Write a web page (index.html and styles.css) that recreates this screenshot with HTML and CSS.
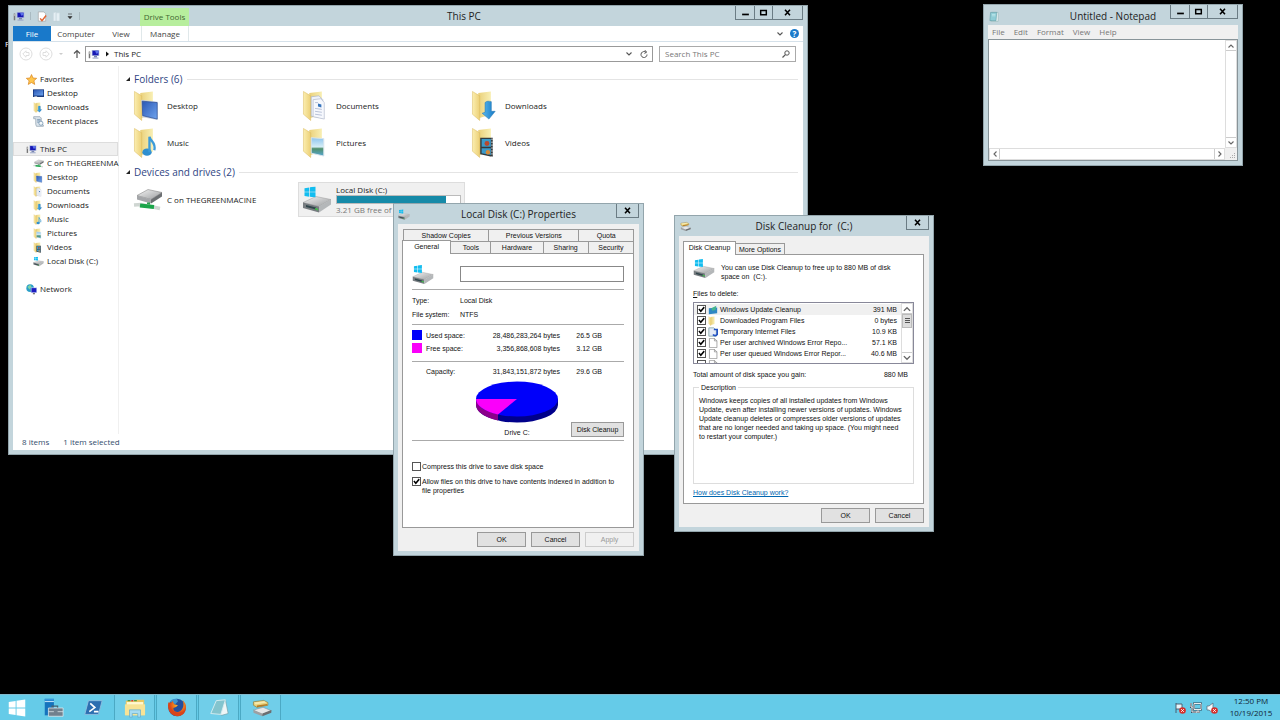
FILE: index.html
```html
<!DOCTYPE html>
<html lang="en">
<head>
<meta charset="utf-8">
<title>Desktop</title>
<link rel="stylesheet" href="styles.css">
</head>
<body>
<svg class="sprite" aria-hidden="true">
  <defs>
    <linearGradient id="gFolder" x1="0" x2="1"><stop offset="0" stop-color="#fbeeb0"/><stop offset="1" stop-color="#ecd077"/></linearGradient>
    <linearGradient id="gBack" x1="0" x2="1"><stop offset="0" stop-color="#ead07a"/><stop offset="1" stop-color="#f8efb4"/></linearGradient>
    <linearGradient id="gBlue" x1="0" y1="0" x2="1" y2="1"><stop offset="0" stop-color="#2a57b4"/><stop offset="1" stop-color="#6fa4ee"/></linearGradient>
    <linearGradient id="gArrow" x1="0" x2="1"><stop offset="0" stop-color="#58b8ee"/><stop offset="1" stop-color="#1478c4"/></linearGradient>
    <linearGradient id="gSky" x1="0" y1="0" x2="0" y2="1"><stop offset="0" stop-color="#8cc4ee"/><stop offset=".5" stop-color="#d5edf6"/><stop offset=".6" stop-color="#4f8f6c"/><stop offset="1" stop-color="#58a8d2"/></linearGradient>
    <linearGradient id="gMetal" x1="0" y1="0" x2="1" y2="1"><stop offset="0" stop-color="#f4f4f4"/><stop offset="1" stop-color="#9a9c9e"/></linearGradient>
    <radialGradient id="gFox" cx=".6" cy=".3"><stop offset="0" stop-color="#ffd23c"/><stop offset=".5" stop-color="#f58a1c"/><stop offset="1" stop-color="#d8451a"/></radialGradient>
  </defs>
  <symbol id="flag" viewBox="0 0 16 16"><path fill="#12bdf0" d="M0 2.500 7 1.400V7.600H0zM8 1.200 16 0V7.600H8zM0 8.500H7V14.800L0 13.700zM8 8.500H16V16L8 14.900z"/></symbol>
  <symbol id="pc" viewBox="0 0 16 14"><path d="M1 3h2v9H1z" fill="#777"/><path d="M1 4h2v2H1z" fill="#c4c4c4"/><path d="M5 1h10v8H5z" fill="#a8b4d8"/><path d="M6 2h8v6H6z" fill="#1717b4"/><path d="M9.500 2H14v3L11 6z" fill="#5b72e8"/><path d="M8 9h4v2H8z" fill="#7a86b0"/><path d="M6 11h8v1.500H6z" fill="#9aa6c8"/></symbol>
  <symbol id="folder" viewBox="0 0 30 32"><path d="M7 3 20 1.500v24L8 29z" fill="url(#gBack)"/><path d="M1 1.500 8.500 6v25.500L1 25z" fill="url(#gFolder)" stroke="#d9b95a" stroke-width=".5"/></symbol>
  <symbol id="f-desktop" viewBox="0 0 30 32"><use href="#folder"/><path d="M8 10 25 12v19L9 28z" fill="#c9d3e2"/><path d="M9 11.500 24.500 13V30L9.500 26.500z" fill="url(#gBlue)" stroke="#28498f" stroke-width=".7"/></symbol>
  <symbol id="f-docs" viewBox="0 0 30 32"><use href="#folder"/><path d="M9 7 17 6l4 4v19L9 27z" fill="#eef2fa" stroke="#a6b0c4" stroke-width=".7"/><path d="M11 10 19 9l3.500 4v17L11 27.500z" fill="#f6f8fd" stroke="#a6b0c4" stroke-width=".6"/><path d="M13 13h3M13 19l7 1M13 22l7 1M13 25l7 1" stroke="#9aa8c6" stroke-width=".7"/><path d="M16 14l3.500 1v3L16 17z" fill="#3674bc"/></symbol>
  <symbol id="f-down" viewBox="0 0 30 32"><use href="#folder"/><path d="M14 13c2-2 4-1.500 6.500-1v10h4L18 30 11 24l3-1z" fill="url(#gArrow)" stroke="#1c6fae" stroke-width=".5"/></symbol>
  <symbol id="f-music" viewBox="0 0 30 32"><use href="#folder"/><ellipse cx="14" cy="26" rx="4.800" ry="3.800" fill="#2f8fd0"/><path d="M16.500 26V10c1 5 7 6 5 14" fill="none" stroke="#3d9bd8" stroke-width="2.400"/></symbol>
  <symbol id="f-pics" viewBox="0 0 30 32"><use href="#folder"/><path d="M9 11 22 12v18L9 27z" fill="url(#gSky)" stroke="#d9e4ec"/></symbol>
  <symbol id="f-video" viewBox="0 0 30 32"><use href="#folder"/><path d="M9 11 22 11v20L9 28z" fill="#333a3e"/><path d="M10.500 12.500h9.500v8h-9.500zM10.500 22h9.500v7l-9.500-2z" fill="#3a9acb"/><circle cx="16" cy="17" r="2.500" fill="#b8482f"/><circle cx="17" cy="26" r="2.300" fill="#d58b3a"/><path d="M21.200 12v19" stroke="#eee" stroke-width="1" stroke-dasharray="1.500 1.500"/></symbol>
  <symbol id="disk" viewBox="0 0 30 26"><path d="M1 16 14 10l15 3-12 7z" fill="url(#gMetal)" stroke="#888" stroke-width=".4"/><path d="M1 16l16 4v6L1 21.500z" fill="#777c80"/><path d="M17 20l12-7v5L17 26z" fill="#b4b7b9"/><path d="M4 18.500l10 2.600v2L4 20.500z" fill="#30454b"/><path d="M13 21.500l3 .8v1.600l-3-.8z" fill="#3fbf4a"/><use href="#flag" x="2" y="0" width="12" height="11"/></symbol>
  <symbol id="netdisk" viewBox="0 0 30 24"><path d="M4 8 15 2l14 3-11 7z" fill="url(#gMetal)" stroke="#777" stroke-width=".5"/><path d="M4 8l14 4v4L4 12z" fill="#a4a6a9"/><path d="M18 12l11-7v4l-11 7z" fill="#6c6f72"/><path d="M14 15h3v4h-3z" fill="#2aa14c"/><path d="M1 17.500 8 17l19 4" stroke="#cfd6d2" stroke-width="3.500" fill="none"/><path d="M7 18l14 1.500" stroke="#1ba54a" stroke-width="4"/></symbol>
  <symbol id="star" viewBox="0 0 16 16"><path d="M8 .8 10.200 5.800 15.500 6.300 11.500 9.900 12.700 15.200 8 12.400 3.300 15.200 4.500 9.900.5 6.300 5.800 5.800z" fill="#ffc64d" stroke="#d8811d"/></symbol>
  <symbol id="monitor" viewBox="0 0 16 14"><path d="M0 1h16v11H0z" fill="#0d2f75"/><path d="M1 2h14v8H1z" fill="url(#gBlue)"/><path d="M2 11h4v1H2z" fill="#ddd"/></symbol>
  <symbol id="recent" viewBox="0 0 16 16"><path d="M1 1h9l2 2v9l3 1v2H5l-1-3V4H1z" fill="#dbe4ec" stroke="#8b9cab"/><path d="M6 5h5M6 7h5M6 9h4" stroke="#6487a8"/><circle cx="11.500" cy="10.500" r="3" fill="#f4f8fa" stroke="#6487a8"/></symbol>
  <symbol id="network" viewBox="0 0 16 16"><circle cx="6" cy="6" r="5.500" fill="#2a9fc8"/><path d="M2 4l4-3 2 3-3 4z" fill="#7fd4a5"/><path d="M7 5h9v8H7z" fill="#b9c5ee"/><path d="M8 6h7v6H8z" fill="#1b1bc0"/><path d="M10 13h3v2h-3z" fill="#777"/></symbol>
  <symbol id="cleaner" viewBox="0 0 32 26"><path d="M5 4 20 2l6 3v4L10 12 5 9z" fill="#e9d27a" stroke="#8a6a20" stroke-width=".8"/><path d="M6 5l15-2 3 2-16 3z" fill="#f6eab0"/><path d="M10 9.500l15-2.500v2L10 12z" fill="#b57a25"/><path d="M5 16l14-4 12 5-13 6z" fill="#e6e7e8" stroke="#777" stroke-width=".6"/><path d="M5 16l13 5v4L5 20z" fill="#9da0a3"/><path d="M18 21l13-5v4l-13 5z" fill="#6b6e71"/></symbol>
  <symbol id="note" viewBox="0 0 16 16"><path d="M5 2h9v13H4z" fill="#f1f6f7" stroke="#9bb"/><path d="M3 2h9l-1 12H2z" fill="#8fcdd6" stroke="#4d8f99" stroke-width=".7"/><path d="M5 5h5M5 7h5" stroke="#c9ecef"/></symbol>
  <symbol id="page" viewBox="0 0 12 14"><path d="M1 .5h7l3.500 3.500v9.500H1z" fill="#fff" stroke="#888"/><path d="M8 .5V4h3.500" fill="none" stroke="#888"/></symbol>
  <symbol id="up" viewBox="0 0 8 8"><path d="M1.500 5.500 4 3 6.500 5.500" fill="none" stroke="currentColor" stroke-width="1.100"/></symbol>
  <symbol id="dn" viewBox="0 0 8 8"><path d="M1.500 2.500 4 5 6.500 2.500" fill="none" stroke="currentColor" stroke-width="1.100"/></symbol>
  <symbol id="lt" viewBox="0 0 8 8"><path d="M5.500 1.500 3 4 5.500 6.500" fill="none" stroke="currentColor" stroke-width="1.100"/></symbol>
  <symbol id="rt" viewBox="0 0 8 8"><path d="M2.500 1.500 5 4 2.500 6.500" fill="none" stroke="currentColor" stroke-width="1.100"/></symbol>
  <symbol id="min" viewBox="0 0 8 8"><path d="M1 5h6v1.500H1z"/></symbol>
  <symbol id="max" viewBox="0 0 8 8"><path d="M1.500 2.200h5v3.800h-5z" fill="none" stroke="#000" stroke-width="1.300"/></symbol>
  <symbol id="close" viewBox="0 0 8 8"><path d="M1.800 1.500 6.200 6.500M6.200 1.500 1.800 6.500" fill="none" stroke="#000" stroke-width="1.400"/></symbol>
  <symbol id="bad" viewBox="0 0 8 8"><circle cx="4" cy="4" r="3.800" fill="#d5302c"/><path d="M2.500 2.500l3 3M5.500 2.500l-3 3" stroke="#fff" stroke-width="1.100"/></symbol>
</svg>

<main class="desktop">
  <span class="desktop-label">F</span>

  <section class="window explorer" aria-label="This PC">
    <header class="explorer-top">
      <div class="quick">
        <svg class="i12"><use href="#pc"/></svg><i class="sep"></i>
        <svg class="i12" viewBox="0 0 12 12"><path d="M2 1h6l2 2v8H2z" fill="#fff" stroke="#a2a2a2" stroke-width=".7"/><path d="M4 8l2 2.500L10.500 5" fill="none" stroke="#e2622f" stroke-width="1.600"/></svg>
        <svg class="i12 faded" viewBox="0 0 12 12"><path d="M2 2l3-1v10H2zM5 2h4v9H5z" fill="#eef6fa" stroke="#c3d3da" stroke-width=".5"/></svg>
        <svg class="i8" viewBox="0 0 8 8"><path d="M2 2h4M2 4.500h4L4 6.800z" fill="#333" stroke="#333" stroke-width=".6"/></svg><i class="sep"></i>
      </div>
      <span class="drive-tools">Drive Tools</span>
      <h1 class="title">This PC</h1>
      <div class="caps">
        <button aria-label="Minimize"><svg><use href="#min"/></svg></button><button aria-label="Maximize"><svg><use href="#max"/></svg></button><button class="wide" aria-label="Close"><svg><use href="#close"/></svg></button>
      </div>
    </header>
    <nav class="ribbon">
      <button class="file">File</button><button class="rb-computer">Computer</button><button class="rb-view">View</button><button class="rb-manage">Manage</button>
      <span class="grow"></span>
      <button class="plain" aria-label="Expand the ribbon"><svg class="i8"><use href="#dn"/></svg></button>
      <button class="help" aria-label="Help">?</button>
    </nav>
    <div class="address-row">
      <button class="plain" aria-label="Back"><svg class="i14" viewBox="0 0 14 14"><circle cx="7" cy="7" r="6" fill="none" stroke="#dedede"/><path d="M10 5.500H7V3.800L3.800 7 7 10.200V8.500h3z" fill="none" stroke="#dedede"/></svg></button>
      <button class="plain fwd" aria-label="Forward"><svg class="i14" viewBox="0 0 14 14"><circle cx="7" cy="7" r="6" fill="none" stroke="#dedede"/><path d="M4 5.500h3V3.800L10.200 7 7 10.200V8.500H4z" fill="none" stroke="#dedede"/></svg></button>
      <svg class="i8 history" viewBox="0 0 8 8"><path d="M2 3h4L4 5z" fill="#ccc"/></svg>
      <button class="plain" aria-label="Up"><svg class="i10" viewBox="0 0 10 10"><path d="M5 9V1.500M2 4.500l3-3 3 3" fill="none" stroke="#555" stroke-width="1.200"/></svg></button>
      <div class="address">
        <svg class="i12"><use href="#pc"/></svg><svg class="i8" viewBox="0 0 8 8"><path d="M3 1.500 6 4 3 6.500z" fill="#111"/></svg><span>This PC</span><span class="grow"></span>
        <button class="plain" aria-label="Recent locations"><svg class="i8"><use href="#dn"/></svg></button>
        <button class="plain" aria-label="Refresh"><svg class="i8" viewBox="0 0 8 8"><path d="M6.200 2.500A3 3 0 1 0 7 4.500M4.500 0l2.200 2-2.200 1.500" fill="none" stroke="#555"/></svg></button>
      </div>
      <label class="search"><input type="text" placeholder="Search This PC" aria-label="Search This PC"><svg class="i8" viewBox="0 0 8 8"><circle cx="5" cy="3" r="2.200" fill="none" stroke="#555"/><path d="M3.400 4.600.5 7.500" stroke="#555" stroke-width="1.200"/></svg></label>
    </div>
    <div class="explorer-main">
      <nav class="tree">
        <ul>
          <li class="root"><svg><use href="#star"/></svg>Favorites</li>
          <li><svg><use href="#monitor"/></svg>Desktop</li>
          <li><svg><use href="#f-down"/></svg>Downloads</li>
          <li><svg><use href="#recent"/></svg>Recent places</li>
        </ul>
        <ul>
          <li class="root current"><svg><use href="#pc"/></svg>This PC</li>
          <li><svg><use href="#netdisk"/></svg>C on THEGREENMA</li>
          <li><svg><use href="#f-desktop"/></svg>Desktop</li>
          <li><svg><use href="#f-docs"/></svg>Documents</li>
          <li><svg><use href="#f-down"/></svg>Downloads</li>
          <li><svg><use href="#f-music"/></svg>Music</li>
          <li><svg><use href="#f-pics"/></svg>Pictures</li>
          <li><svg><use href="#f-video"/></svg>Videos</li>
          <li><svg><use href="#disk"/></svg>Local Disk (C:)</li>
        </ul>
        <ul><li class="root"><svg><use href="#network"/></svg>Network</li></ul>
      </nav>
      <div class="files">
        <h2>Folders (6)</h2>
        <ul class="tiles">
          <li><svg><use href="#f-desktop"/></svg>Desktop</li>
          <li><svg><use href="#f-docs"/></svg>Documents</li>
          <li><svg><use href="#f-down"/></svg>Downloads</li>
          <li><svg><use href="#f-music"/></svg>Music</li>
          <li><svg><use href="#f-pics"/></svg>Pictures</li>
          <li><svg><use href="#f-video"/></svg>Videos</li>
        </ul>
        <h2>Devices and drives (2)</h2>
        <ul class="tiles drives">
          <li><svg><use href="#netdisk"/></svg>C on THEGREENMACINE</li>
          <li class="selected"><svg><use href="#disk"/></svg><div class="drive"><span>Local Disk (C:)</span><div class="bar"><div class="fill" style="width:89%"></div></div><span class="muted">3.21 GB free of 29.6 GB</span></div></li>
        </ul>
      </div>
    </div>
    <footer class="status"><span>8 items</span><span>1 item selected</span></footer>
  </section>

  <section class="window notepad" aria-label="Untitled - Notepad">
    <header class="titlebar">
      <svg class="i12"><use href="#note"/></svg><h1 class="title">Untitled - Notepad</h1>
      <div class="caps"><button aria-label="Minimize"><svg><use href="#min"/></svg></button><button aria-label="Maximize"><svg><use href="#max"/></svg></button><button class="wide" aria-label="Close"><svg><use href="#close"/></svg></button></div>
    </header>
    <nav class="menu"><button>File</button><button>Edit</button><button>Format</button><button>View</button><button>Help</button></nav>
    <div class="editor">
      <textarea aria-label="Text"></textarea>
      <div class="vscroll"><button aria-label="Scroll up"><svg><use href="#up"/></svg></button><span class="grow"></span><button aria-label="Scroll down"><svg><use href="#dn"/></svg></button></div>
      <div class="hscroll"><button aria-label="Scroll left"><svg><use href="#lt"/></svg></button><span class="grow"></span><button aria-label="Scroll right"><svg><use href="#rt"/></svg></button></div>
      <svg class="grip" viewBox="0 0 12 12"><path d="M9 5h1v1H9zM9 7h1v1H9zM7 7h1v1H7zM9 9h1v1H9zM7 9h1v1H7zM5 9h1v1H5z" fill="#aaa"/></svg>
    </div>
  </section>

  <section class="window dialog properties" aria-label="Local Disk (C:) Properties">
    <header class="titlebar"><svg class="i12"><use href="#disk"/></svg><h1 class="title">Local Disk (C:) Properties</h1><div class="caps"><button aria-label="Close"><svg><use href="#close"/></svg></button></div></header>
    <div class="dialog-body">
      <div class="tabs back" role="tablist"><button role="tab">Shadow Copies</button><button role="tab">Previous Versions</button><button role="tab">Quota</button></div>
      <div class="tabs front" role="tablist"><button role="tab" class="active">General</button><button role="tab">Tools</button><button role="tab">Hardware</button><button role="tab">Sharing</button><button role="tab">Security</button></div>
      <div class="panel">
        <div class="name-row"><svg class="disk-icon"><use href="#disk"/></svg><input type="text" aria-label="Volume label"></div>
        <dl class="facts"><dt>Type:</dt><dd>Local Disk</dd><dt>File system:</dt><dd>NTFS</dd></dl>
        <table class="space">
          <tbody class="usage"><tr><th><div><span class="swatch used"></span>Used space:</div></th><td>28,486,283,264 bytes</td><td>26.5 GB</td></tr>
          <tr><th><div><span class="swatch free"></span>Free space:</div></th><td>3,356,868,608 bytes</td><td>3.12 GB</td></tr></tbody>
          <tbody class="cap"><tr><th><div><span class="swatch"></span>Capacity:</div></th><td>31,843,151,872 bytes</td><td>29.6 GB</td></tr></tbody>
        </table>
        <div class="chart">
          <figure><svg viewBox="0 0 82 42"><path d="M0 18v6a41 17.500 0 0 0 82 0v-6z" fill="#00008b"/><path d="M0 18v6a41 17.500 0 0 0 22 15.500V33z" fill="#8b008b"/><ellipse cx="41" cy="18" rx="41" ry="17.500" fill="#0000fa"/><path d="M41 18H0a41 17.500 0 0 0 22 15.500z" fill="#fa00fa"/></svg><figcaption>Drive C:</figcaption></figure>
          <button class="btn cleanup-btn">Disk Cleanup</button>
        </div>
        <label class="check"><input type="checkbox">Compress this drive to save disk space</label>
        <label class="check"><input type="checkbox" checked>Allow files on this drive to have contents indexed in addition to file properties</label>
      </div>
      <footer class="actions"><button class="btn">OK</button><button class="btn">Cancel</button><button class="btn" disabled>Apply</button></footer>
    </div>
  </section>

  <section class="window dialog cleanup" aria-label="Disk Cleanup for (C:)">
    <header class="titlebar"><svg class="i12"><use href="#cleaner"/></svg><h1 class="title">Disk Cleanup for&nbsp; (C:)</h1><div class="caps"><button aria-label="Close"><svg><use href="#close"/></svg></button></div></header>
    <div class="dialog-body">
      <div class="tabs front" role="tablist"><button role="tab" class="active">Disk Cleanup</button><button role="tab">More Options</button></div>
      <div class="panel">
        <div class="intro"><svg class="disk-icon"><use href="#disk"/></svg><p>You can use Disk Cleanup to free up to 880 MB of disk space on&nbsp; (C:).</p></div>
        <p class="list-label"><u>F</u>iles to delete:</p>
        <div class="list">
          <ul>
            <li class="hot"><label><input type="checkbox" checked><svg viewBox="0 0 12 12"><path d="M1 4 11 3v7L1 11z" fill="#3088c4"/><path d="M4 4l6-3-1 5-4 1z" fill="#45b58d"/></svg><span>Windows Update Cleanup</span></label><span>391 MB</span></li>
            <li><label><input type="checkbox" checked><svg><use href="#folder"/></svg><span>Downloaded Program Files</span></label><span>0 bytes</span></li>
            <li><label><input type="checkbox" checked><svg viewBox="0 0 12 12"><path d="M1 1h6l3 3v7H1z" fill="#e5ebf7" stroke="#8aa"/><path d="M7 3h4v6a3 3 0 0 1-5 0" fill="none" stroke="#2353c4" stroke-width="2"/></svg><span>Temporary Internet Files</span></label><span>10.9 KB</span></li>
            <li><label><input type="checkbox" checked><svg><use href="#page"/></svg><span>Per user archived Windows Error Repo...</span></label><span>57.1 KB</span></li>
            <li><label><input type="checkbox" checked><svg><use href="#page"/></svg><span>Per user queued Windows Error Repor...</span></label><span>40.6 MB</span></li>
            <li><label><input type="checkbox" aria-label="More files"><svg><use href="#page"/></svg></label></li>
          </ul>
          <div class="vscroll"><button aria-label="Scroll up"><svg><use href="#up"/></svg></button><div class="thumb"></div><span class="grow"></span><button aria-label="Scroll down"><svg><use href="#dn"/></svg></button></div>
        </div>
        <p class="total"><span>Total amount of disk space you gain:</span><span>880 MB</span></p>
        <fieldset><legend>Description</legend><p>Windows keeps copies of all installed updates from Windows Update, even after installing newer versions of updates. Windows Update cleanup deletes or compresses older versions of updates that are no longer needed and taking up space. (You might need to restart your computer.)</p></fieldset>
        <a href="#">How does Disk Cleanup work?</a>
      </div>
      <footer class="actions"><button class="btn">OK</button><button class="btn">Cancel</button></footer>
    </div>
  </section>
</main>

<footer class="taskbar">
  <button aria-label="Start"><svg viewBox="0 0 24 24"><path fill="#fff" d="M3 5.500 10.500 4.300V11.500H3zM11.500 4.100 21 2.800V11.500H11.500zM3 12.500H10.500V19.700L3 18.500zM11.500 12.500H21V21.200L11.500 19.900z"/></svg></button>
  <button aria-label="Server Manager"><svg viewBox="0 0 24 24"><path d="M3 2h10v18H3z" fill="#1673bd"/><path d="M3 5h10" stroke="#d9f1ff"/><path d="M3 2h10v2H3z" fill="#3796dc"/><path d="M11 12v-2h6v2" fill="none" stroke="#49606f" stroke-width="1.400"/><path d="M7 12h16v9H7z" fill="#71808e" stroke="#e6eef2" stroke-width=".8"/><path d="M7 16h6M17 16h6" stroke="#dfe8ec" stroke-width=".8"/></svg></button>
  <button class="powershell" aria-label="PowerShell"><svg viewBox="0 0 24 24"><path d="M7 4h15l-4 15H3z" fill="#2c6eb0" stroke="#8fbfe0"/><path d="M9 7l5 4.500L8 16M13 16h5" fill="none" stroke="#fff" stroke-width="1.800"/></svg></button>
  <button class="task" aria-label="File Explorer"><svg viewBox="0 0 24 24"><path d="M2 4h8l2-1h10v17H2z" fill="#e9c863"/><path d="M3 5.500h18v5H3z" fill="#fff8d2"/><path d="M4 4h3M11 4h3" stroke="#4a9a4a" stroke-width="1.500"/><path d="M8 4h2" stroke="#d33" stroke-width="1.500"/><path d="M1 8h22v12H1z" fill="#f7e396"/><path d="M6 22v-8h12v8h-3v-4H9v4z" fill="#a6dcf2" stroke="#5da8c8" stroke-width=".7"/></svg></button>
  <button class="task" aria-label="Firefox"><svg viewBox="0 0 24 24"><circle cx="12" cy="11.500" r="9.500" fill="#254f9c"/><path d="M4 5a8 8 0 0 1 8-3l1 3-3 3z" fill="#3f94d0"/><path d="M2.500 6c-2 10 5 15.500 11 15 7-.6 10-8 7.500-14l-3-4c3 8-1 12-4 13-4 1-6-1-6-4l3-1 2-2-4-1-2-4-1 2z" fill="url(#gFox)"/></svg></button>
  <button class="task" aria-label="Notepad"><svg viewBox="0 0 24 24"><path d="M19 3l3 15-7 2-5-3z" fill="#eef6f7" stroke="#709ba2" stroke-width=".7"/><path d="M9 4 19 3l-5 16L3 18z" fill="#83c4ce" stroke="#d8eef1"/></svg></button>
  <button class="task" aria-label="Disk Cleanup"><svg><use href="#cleaner"/></svg></button>
  <span class="grow"></span>
  <div class="tray">
    <svg viewBox="0 0 12 12"><path d="M2 1v10M2 2h6v5H2" fill="#e8f5fa" stroke="#456" stroke-width=".9"/><use href="#bad" x="5" y="5" width="7" height="7"/></svg>
    <svg viewBox="0 0 12 12"><path d="M4 1.500h7v6H4zM1 1v4h2M2 5v5h5M6 10h4M8 8v2" fill="none" stroke="#345" stroke-width="1.800"/><path d="M4 1.500h7v6H4zM1 1v4h2M2 5v5h5M6 10h4M8 8v2" fill="none" stroke="#fff" stroke-width=".9"/></svg>
    <svg viewBox="0 0 12 12"><path d="M1 4h2l4-3v10L3 8H1z" fill="#f4fafc" stroke="#567" stroke-width=".7"/><use href="#bad" x="5" y="5" width="7" height="7"/></svg>
  </div>
  <time class="clock">12:50 PM<br>10/19/2015</time>
</footer>
</body>
</html>
```

FILE: styles.css
```css
* { box-sizing: border-box; }
body { margin: 0; height: 100vh; display: flex; flex-direction: column; background: #000; overflow: hidden; font: 8px/12px "Open Sans", "Noto Sans", sans-serif; color: #222; }
h1, h2, p, ul, dl, dd, figure { margin: 0; padding: 0; font-weight: 400; }
ul { list-style: none; }
button, input, textarea { font: inherit; color: inherit; border: 0; padding: 0; margin: 0; border-radius: 0; background: none; outline: 0; }
svg { display: block; flex: none; }
.sprite { position: absolute; width: 0; height: 0; }
.grow { flex: 1; }
.i8 { width: 8px; height: 8px; }
.i10 { width: 10px; height: 10px; }
.i12 { width: 12px; height: 11px; }
.i14 { width: 14px; height: 14px; }
.faded { opacity: .8; }
.plain { display: flex; align-items: center; color: #555; }

.desktop { position: relative; flex: 1; }
.desktop-label { position: absolute; left: 5px; top: 38px; color: #fff; }

.window { position: absolute; display: flex; flex-direction: column; padding: 0 4px 4px; background: #c3d5dc; border: 1px solid #93a5ac; }
.explorer { left: 8px; top: 5px; width: 800px; height: 450px; }
.notepad { left: 983px; top: 4px; width: 260px; height: 162px; }
.properties { left: 393px; top: 203px; width: 251px; }
.cleanup { left: 674px; top: 215px; width: 260px; }

.title { font-size: 10px; line-height: 20px; text-align: center; white-space: nowrap; }
.titlebar { display: grid; grid-template-columns: 1fr auto 1fr; height: 20px; align-items: center; }
.caps { display: flex; align-self: start; justify-self: end; border: 1px solid #6b7c84; border-top: 0; }
.caps button { width: 18px; height: 13px; display: flex; align-items: center; justify-content: center; }
.caps button + button { border-left: 1px solid #6b7c84; }
.caps .wide { width: 30px; }
.caps svg { width: 9px; height: 9px; }
.dialog .caps button { width: 21px; }

.explorer-top { display: flex; height: 20px; }
.quick { display: flex; align-items: center; gap: 3px; width: 127px; }
.sep { width: 1px; height: 8px; background: #a9bac1; margin: 0 2px; }
.drive-tools { width: 49px; margin-top: 2px; background: #b7ee9d; color: #3f6630; text-align: center; line-height: 18px; }
.explorer-top .title { flex: 1; padding-left: 4px; }
.ribbon { display: flex; align-items: center; height: 16px; background: #fff; border-bottom: 1px solid #d5e1ea; color: #444; }
.ribbon button { height: 100%; }
.ribbon .file { width: 38px; background: #1979ca; color: #fff; }
.rb-computer { width: 50px; }
.rb-view { width: 40px; }
.ribbon .rb-manage { width: 48px; border: solid #e0e8ea; border-width: 0 1px; }
.ribbon .help { width: 9px; height: 9px; margin: 0 4px 0 6px; border-radius: 50%; background: #1979ca; color: #fff; font-weight: 700; line-height: 9px; }
.address-row { display: flex; align-items: center; height: 24px; padding: 0 7px 0 6px; background: #fff; }
.fwd { margin-left: 6px; }
.history { margin: 0 4px; }
.address-row > .plain:nth-of-type(3) { margin-left: 3px; }
.address { flex: 1; display: flex; align-items: center; gap: 3px; height: 16px; margin: 0 6px 0 3px; padding: 0 4px 0 2px; border: 1px solid #999; }
.address .plain { margin-left: 4px; }
.search { display: flex; align-items: center; width: 137px; height: 16px; padding: 0 5px; border: 1px solid #aaa; }
.search input { flex: 1; min-width: 0; }
.search input::placeholder { color: #777; opacity: 1; }

.explorer-main { flex: 1; display: flex; min-height: 0; background: #fff; }
.tree { width: 106px; padding-top: 6px; border-right: 1px solid #f0f0f0; }
.tree ul { margin-bottom: 14px; }
.tree li { display: flex; align-items: center; gap: 3px; height: 14px; padding-left: 19px; white-space: nowrap; border: 1px solid transparent; }
.tree li.root { padding-left: 12px; }
.tree .current { background: #f0f0f0; border-color: #ddd; }
.tree svg { width: 11px; height: 11px; }
.files { flex: 1; min-width: 0; padding: 6px 5px 0 7px; }
.files h2 { display: flex; align-items: center; gap: 4px; font-size: 10px; line-height: 14px; color: #2f4583; }
.files h2::before { content: ""; width: 4px; height: 4px; background: #222; clip-path: polygon(100% 0, 100% 100%, 0 100%); }
.files h2::after { content: ""; flex: 1; height: 1px; background: #e4e4e4; }
.tiles { display: grid; grid-template-columns: repeat(auto-fill, 169px); padding: 1px 0 4px 5px; }
.tiles li { display: flex; align-items: center; gap: 4px; height: 37px; padding-left: 2px; }
.tiles svg { width: 30px; height: 31px; }
.drives { padding-top: 3px; }
.drives li { width: 167px; height: 35px; }
.drives .selected { margin-left: -2px; padding-left: 3px; border: 1px solid #ddd; background: #f0f0f0; }
.drives .selected svg { height: 27px; }
.drive { flex: 1; line-height: 11px; }
.bar { height: 9px; border: 1px solid #bbb; margin-right: 3px; background: #fff; }
.fill { height: 100%; background: #168aa8; }
.muted { color: #777; }
.status { display: flex; gap: 14px; height: 16px; padding: 0 9px; line-height: 16px; background: #fff; color: #334c6c; }

.notepad .title { line-height: 22px; }
.menu { display: flex; gap: 9px; height: 14px; padding: 0 4px; background: #f0f0f0; color: #777; }
.editor { flex: 1; display: grid; grid-template: minmax(0, 1fr) 12px / minmax(0, 1fr) 12px; border: 1px solid #889499; background: #f0f0f0; }
.editor textarea { width: 100%; height: 100%; background: #fff; resize: none; overflow: hidden; }
.vscroll, .hscroll { display: flex; background: #fff; border: 1px solid #ddd; }
.vscroll { flex-direction: column; }
.vscroll button, .hscroll button { display: flex; align-items: center; justify-content: center; width: 10px; height: 10px; color: #666; }
.vscroll button:first-child { border-bottom: 1px solid #ccc; }
.vscroll button:last-child { border-top: 1px solid #ccc; }
.hscroll button:first-child { border-right: 1px solid #ccc; }
.hscroll button:last-child { border-left: 1px solid #ccc; }
.vscroll svg, .hscroll svg { width: 8px; height: 8px; }
.grip { width: 12px; height: 12px; }

.dialog-body { padding: 5px 5px 4px 4px; background: #f0f0f0; font: 7px/9px "Liberation Sans", Arial, sans-serif; color: #111; }
.tabs { display: flex; position: relative; z-index: 1; }
.tabs button { height: 12px; border: 1px solid #999; border-left-width: 0; background: #f0f0f0; white-space: nowrap; }
.tabs button:first-child { border-left-width: 1px; }
.tabs.back { margin-left: 1px; }
.tabs.back button { flex: 90; border-bottom: 0; }
.tabs.back button:last-child { flex: 54; }
.tabs.back button:first-child { flex: 85; }
.tabs.front { align-items: flex-end; }
.tabs.front button { border-bottom: 0; }
.tabs.front .active { height: 14px; margin: -2px 0 -1px; padding-bottom: 2px; background: #fff; border-width: 1px 1px 0; }
.properties .tabs.front button { flex: 45; }
.properties .tabs.front .active { flex: 48; }
.properties .tabs.front button:nth-child(2) { flex: 40; }
.properties .tabs.front button:nth-child(3) { flex: 52; }
.cleanup .tabs button { width: 49px; height: 11px; }
.cleanup .tabs.front .active { width: 53px; height: 14px; margin-top: 0; }
.panel { background: #fff; border: 1px solid #999; padding: 0 9px; }
.properties .panel { height: 275px; }
.name-row { display: flex; align-items: center; gap: 26px; height: 36px; padding-top: 5px; border-bottom: 1px solid #aaa; }
.disk-icon { width: 22px; height: 19px; }
.name-row input { flex: 1; min-width: 0; height: 16px; border: 1px solid #888; padding: 0 3px; }
.facts { display: grid; grid-template-columns: 48px 1fr; line-height: 14px; padding: 4px 0 2px; border-bottom: 1px solid #aaa; }
.space { width: 100%; border-collapse: collapse; }
.space th { width: 74px; padding: 0; text-align: left; font-weight: 400; white-space: nowrap; }
.space th div { display: flex; align-items: center; }
.space td { width: 74px; padding: 0; text-align: right; white-space: nowrap; }
.space td:last-child { width: 64px; padding-right: 22px; }
.usage { border-bottom: 1px solid #aaa; }
.usage tr:first-child { height: 17px; }
.usage tr:first-child > * { padding-top: 3px; }
.usage tr:last-child { height: 19px; }
.usage tr:last-child > * { padding-bottom: 6px; }
.cap tr { height: 20px; }
.swatch { width: 10px; height: 10px; margin-right: 4px; }
.used { background: #0000fa; }
.free { background: #fa00fa; }
.chart { display: flex; align-items: flex-end; justify-content: space-between; height: 60px; padding: 0 0 3px 64px; border-bottom: 1px solid #aaa; margin-bottom: 21px; }
.chart figure svg { width: 82px; height: 42px; }
.chart figcaption { margin-top: 5px; text-align: center; }
.btn { width: 49px; height: 15px; border: 1px solid #999; background: #e1e1e1; }
.btn:disabled { color: #999; background: #f0f0f0; border-color: #ccc; }
.cleanup-btn { width: 53px; }
.check { display: flex; gap: 1px; margin-bottom: 6px; }
input[type="checkbox"] { appearance: none; flex: none; width: 9px; height: 9px; border: 1px solid #555; background: #fff; }
input[type="checkbox"]:checked::after { content: ""; display: block; height: 7px; background: #000; clip-path: polygon(5% 50%, 20% 35%, 40% 58%, 82% 8%, 97% 25%, 40% 92%); }
.actions { display: flex; justify-content: flex-end; gap: 5px; padding-top: 4px; }

.cleanup .panel { padding-bottom: 6px; }
.intro { display: flex; gap: 6px; height: 34px; padding-top: 4px; }
.intro p { flex: 1; padding: 4px 12px 0 0; }
.list-label { height: 13px; }
.list { display: flex; height: 62px; border: 1px solid #889; }
.list ul { flex: 1; padding-top: 1px; overflow: hidden; }
.list li { display: flex; justify-content: space-between; height: 11px; line-height: 11px; padding: 0 4px 0 3px; }
.list .hot { background: #f0f0f0; }
.list label { display: flex; align-items: center; gap: 2px; }
.list svg { width: 10px; height: 10px; }
.thumb { height: 14px; border: 1px solid #bbb; background: linear-gradient(#555, #555) 50% 3px / 5px 1px no-repeat, linear-gradient(#555, #555) 50% 5px / 5px 1px no-repeat, linear-gradient(#555, #555) 50% 7px / 5px 1px no-repeat, #ddd; }
.total { display: flex; justify-content: space-between; padding: 6px 6px 4px 0; }
fieldset { height: 101px; min-width: 0; margin: 0 0 4px; padding: 4px 8px 0 5px; border: 1px solid #ddd; }
legend { padding: 0 2px; }
.cleanup a { color: #0066b0; }

.taskbar { display: flex; height: 26px; background: #65cbe8; border-top: 1px solid #82b9cc; }
.taskbar button { width: 39px; display: flex; align-items: center; justify-content: center; }
.taskbar button:first-child { width: 33px; }
.taskbar .powershell { width: 41px; }
.taskbar .task { width: 41px; margin-left: 1px; background: #70cee9; border: solid #4ba9c4; border-width: 0 1px; }
.taskbar button svg { width: 22px; height: 22px; }
.tray { display: flex; align-items: center; gap: 4px; margin-right: 9px; }
.tray svg { width: 12px; height: 12px; }
.clock { width: 48px; line-height: 12px; text-align: center; margin-right: 5px; color: #123; }
```
